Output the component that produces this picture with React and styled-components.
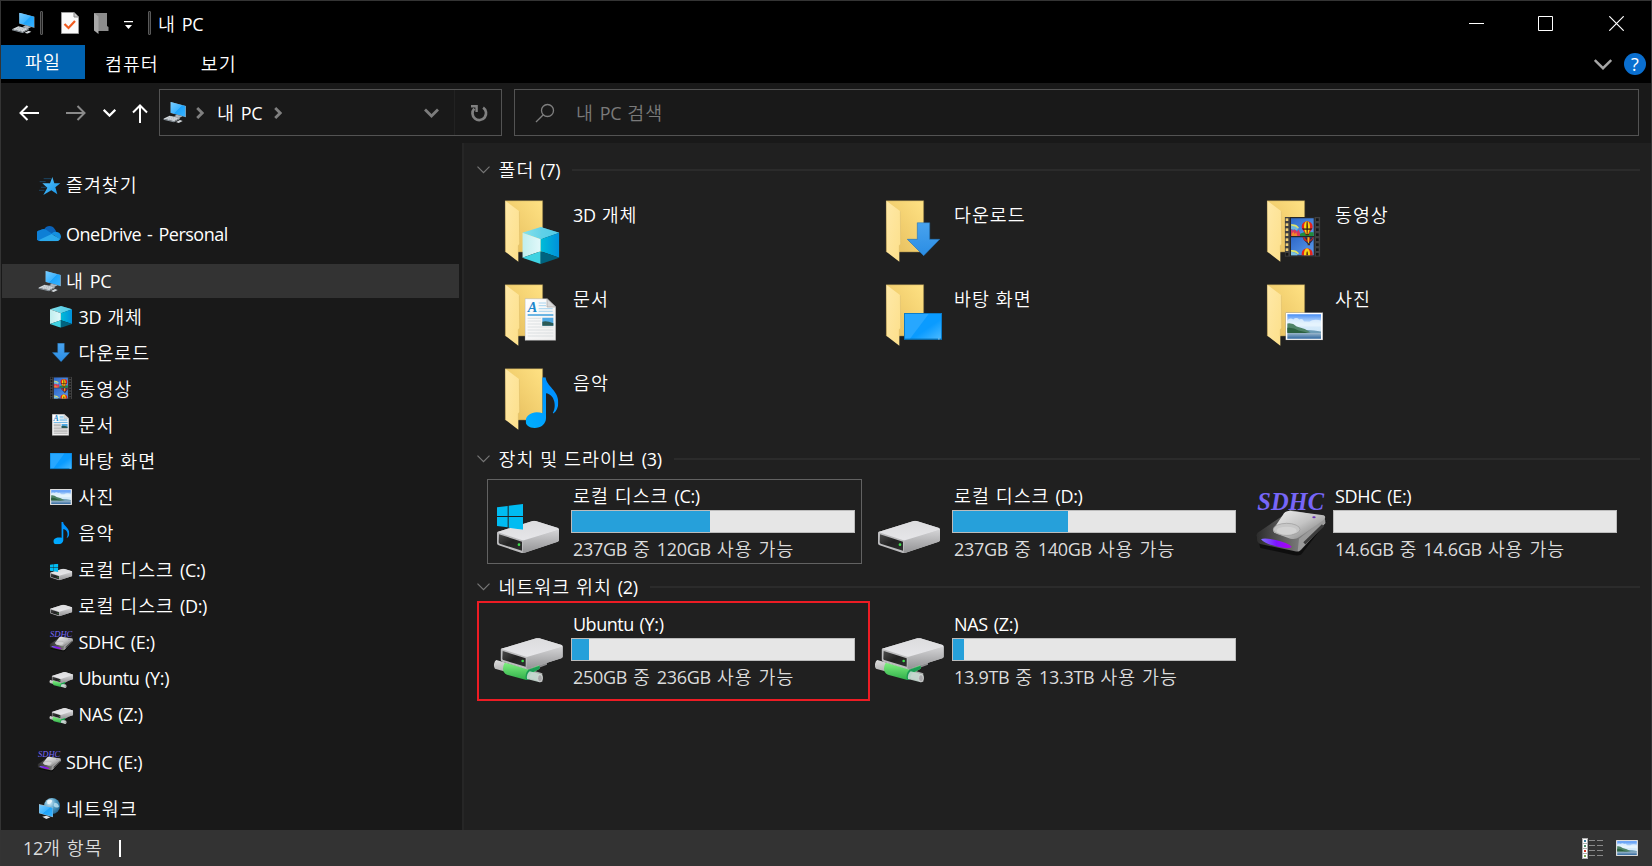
import React from "react";
import styled, { createGlobalStyle } from "styled-components";

const GlobalStyle = createGlobalStyle`
  *, *::before, *::after { box-sizing: border-box; }
  body { margin: 0; background: #191919; overflow: hidden; }
`;

const Window = styled.div`
  width: 1652px;
  height: 866px;
  display: flex;
  flex-direction: column;
  border: 1px solid #343434;
  border-bottom: 0;
  background: #191919;
  color: #fff;
  font-family: "Open Sans", "Noto Sans CJK KR", sans-serif;
  font-size: 18px;
  font-weight: 400;
  line-height: 24px;
  cursor: default;
  svg { display: block; flex: none; }
`;

const LabelBox = styled.span`
  white-space: pre;
`;
const runSpacing = { hangul: 1, space: 1.2, lower: -0.5, latin: -0.3 };
const Run = styled.span`
  letter-spacing: ${(p) => runSpacing[p.$kind]}px;
  font-size: ${(p) => (p.$kind === "hangul" ? 18.4 : 18)}px;
  font-weight: ${(p) => (p.$kind === "hangul" ? 350 : 400)};
`;
const kindOf = (s) =>
  /[가-힣]/.test(s) ? "hangul" : /^\s+$/.test(s) ? "space" : /[a-z]/.test(s) ? "lower" : "latin";
const Label = ({ children }) => (
  <LabelBox>
    {children.match(/[가-힣]+|\s+|[^\s가-힣]+/g).map((s, i) => (
      <Run key={i} $kind={kindOf(s)}>{s}</Run>
    ))}
  </LabelBox>
);

/* ---------- title bar ---------- */
const TitleBar = styled.header`
  height: 44px;
  flex: none;
  display: flex;
  align-items: center;
  background: #000;
  padding-left: 10px;
`;
const TitleText = styled.div`
  padding-top: 2px;
`;
const TitleSeparator = styled.i`
  width: 3px;
  height: 24px;
  margin-left: ${(p) => p.$before}px;
  margin-right: ${(p) => p.$after}px;
  border: 1px solid #5a5a5a;
  border-radius: 1px;
  background: #222;
`;
const QuickTools = styled.div`
  display: flex;
  align-items: center;
  gap: 15px;
`;
const QuickMore = styled.div`
  padding-top: 4px;
`;
const WindowButtons = styled.div`
  margin-left: auto;
  display: flex;
  height: 100%;
`;
const WindowButton = styled.button`
  width: ${(p) => p.$w || 70}px;
  height: 44px;
  padding: 0;
  border: 0;
  background: none;
  display: grid;
  place-items: center;
`;

/* ---------- ribbon ---------- */
const Ribbon = styled.nav`
  height: 38px;
  flex: none;
  display: flex;
  align-items: flex-start;
  background: #000;
`;
const FileTab = styled.div`
  width: 84px;
  height: 34px;
  display: grid;
  place-items: center;
  background: #0063b1;
`;
const RibbonTab = styled.div`
  margin-left: ${(p) => p.$gap}px;
  height: 38px;
  display: flex;
  align-items: center;
`;
const RibbonEnd = styled.div`
  margin-left: auto;
  margin-right: 5px;
  height: 38px;
  display: flex;
  align-items: center;
  gap: 12px;
`;
const HelpBadge = styled.div`
  width: 22px;
  height: 22px;
  border-radius: 50%;
  background: #0a6fd0;
  font-size: 18px;
  font-weight: 400;
  line-height: 22px;
  text-align: center;
`;

/* ---------- navigation ---------- */
const NavBar = styled.div`
  height: 60px;
  flex: none;
  display: flex;
  align-items: flex-start;
  padding: 6px 12px 0 18px;
`;
const NavButtons = styled.div`
  height: 47px;
  width: 140px;
  display: flex;
  align-items: center;
`;
const NavSpace = styled.i`
  width: ${(p) => p.$w}px;
`;
const AddressBox = styled.div`
  width: 343px;
  height: 47px;
  display: flex;
  align-items: center;
  border: 1px solid #535353;
  padding-left: 2px;
`;
const AddressEnd = styled.div`
  margin-left: auto;
  height: 45px;
  display: flex;
  align-items: center;
`;
const RefreshButton = styled.div`
  margin-left: 15px;
  width: 47px;
  height: 45px;
  padding-left: 2px;
  border-left: 1px solid #222;
  display: grid;
  place-items: center;
`;
const SearchBox = styled.div`
  flex: 1;
  margin-left: 12px;
  height: 47px;
  display: flex;
  align-items: center;
  gap: 21px;
  padding-left: 20px;
  border: 1px solid #535353;
  color: #7a7a7a;
`;

/* ---------- body ---------- */
const Body = styled.div`
  flex: 1;
  min-height: 0;
  display: flex;
`;
const Sidebar = styled.aside`
  width: 463px;
  flex: none;
  padding: 24px 3px 0 1px;
  border-right: 2px solid #262626;
`;
const TreeRow = styled.div`
  height: 36px;
  margin-top: ${(p) => p.$gap || 0}px;
  padding-left: ${(p) => (p.$child ? 46 : 34)}px;
  display: flex;
  align-items: center;
  gap: ${(p) => (p.$child ? 4.5 : 4)}px;
  background: ${(p) => (p.$active ? "#333" : "none")};
  ${(p) => p.$active && "border-top: 1px solid #191919; border-bottom: 1px solid #191919;"}
`;
const Content = styled.main`
  flex: 1;
  padding: 9px 11px 0 13px;
  background: #202020;
`;
const GroupHeader = styled.div`
  height: 36px;
  display: flex;
  align-items: center;
`;
const GroupTitle = styled.div`
  margin-left: 8.5px;
  display: flex;
  width: ${(p) => p.$w}px;
`;
const GroupRule = styled.i`
  flex: 1;
  height: 2px;
  background: #2b2b2b;
`;
const FolderGrid = styled.div`
  display: grid;
  grid-template-columns: repeat(3, 375px);
  column-gap: 6px;
  grid-auto-rows: 84px;
  padding-left: 10px;
  margin-bottom: 1px;
`;
const FolderCell = styled.div`
  display: flex;
  gap: 2px;
  padding-right: 8px;
`;
const FolderName = styled.div`
  padding-top: 15px;
`;
const DriveGrid = styled.div`
  display: grid;
  grid-template-columns: repeat(3, 375px);
  column-gap: 6px;
  grid-auto-rows: 85px;
  padding: 2px 0 5px 10px;
`;
const DriveCell = styled.div`
  position: relative;
  display: flex;
  outline: ${(p) => (p.$focused ? "1px solid #626262" : "none")};
  outline-offset: -1px;
`;
const RedFrame = styled.i`
  position: absolute;
  inset: -6px -8px -9px -10px;
  border: 2px solid #ed1c24;
`;
const DriveInfo = styled.div`
  display: flex;
  flex-direction: column;
  width: 284px;
`;
const DriveName = styled.div`
  height: 31px;
  padding: 5px 0 0 2px;
`;
const Meter = styled.div`
  height: 23px;
  border: 1px solid #bcbcbc;
  background: #e6e6e6;
`;
const MeterFill = styled.div`
  height: 21px;
  background: #26a0da;
`;
const DriveFree = styled.div`
  padding: 4px 0 0 2px;
  color: #dcdcdc;
`;

/* ---------- status bar ---------- */
const StatusBar = styled.footer`
  height: 36px;
  flex: none;
  display: flex;
  align-items: center;
  padding: 0 13px 0 22px;
  background: #333;
  color: #dcdcdc;
`;
const Caret = styled.i`
  width: 2px;
  height: 17px;
  margin-left: 16px;
  background: #fff;
`;
const ViewModes = styled.div`
  margin-left: auto;
  display: flex;
  align-items: center;
  gap: 13px;
`;

/* ---------- drawings ---------- */
const Art = ({ x, y, w, h, vw, vh, children }) => (
  <svg x={x} y={y} width={w} height={h} viewBox={`0 0 ${vw} ${vh}`} preserveAspectRatio="none">
    {children}
  </svg>
);

const HiddenSvg = styled.svg`
  position: absolute;
`;
const Defs = () => (
  <HiddenSvg width="0" height="0" aria-hidden="true">
    <defs>
      <linearGradient id="back" x1="0" y1="1" x2="1" y2="0">
        <stop offset="0" stopColor="#e3bb5a" /><stop offset=".5" stopColor="#f2cf6f" /><stop offset="1" stopColor="#ffe284" />
      </linearGradient>
      <linearGradient id="flap" x1="0" y1="0" x2="1" y2="1">
        <stop offset="0" stopColor="#ffe9a8" /><stop offset="1" stopColor="#fcdf8a" />
      </linearGradient>
      <linearGradient id="cubeL" x1="0" y1="0" x2="1" y2="0">
        <stop offset="0" stopColor="#bfeeee" /><stop offset="1" stopColor="#e2f8fa" />
      </linearGradient>
      <linearGradient id="cubeR" x1="0" y1="0" x2="1" y2="0">
        <stop offset="0" stopColor="#00bcd8" /><stop offset="1" stopColor="#0090dc" />
      </linearGradient>
      <linearGradient id="cubeT" x1="0" y1="0" x2="1" y2="0">
        <stop offset="0" stopColor="#86e2ea" /><stop offset="1" stopColor="#45c3e6" />
      </linearGradient>
      <linearGradient id="down" x1="0" y1="0" x2="0" y2="1">
        <stop offset="0" stopColor="#49a3ee" /><stop offset="1" stopColor="#2a8de4" />
      </linearGradient>
      <linearGradient id="desk" x1="0" y1="0" x2="1" y2="1">
        <stop offset="0" stopColor="#0a9bff" /><stop offset=".6" stopColor="#0a9bff" /><stop offset="1" stopColor="#4ab9ff" />
      </linearGradient>
      <linearGradient id="filmSky" x1="0" y1="0" x2="1" y2="1">
        <stop offset="0" stopColor="#2f68c8" /><stop offset="1" stopColor="#5b9cee" />
      </linearGradient>
      <linearGradient id="sky" x1="0" y1="0" x2="0" y2="1">
        <stop offset="0" stopColor="#4a8ff5" /><stop offset=".5" stopColor="#d8edfc" /><stop offset="1" stopColor="#cfe6f7" />
      </linearGradient>
      <linearGradient id="sea" x1="0" y1="0" x2="0" y2="1">
        <stop offset="0" stopColor="#9db8cc" /><stop offset="1" stopColor="#31689f" />
      </linearGradient>
      <linearGradient id="note" x1="0" y1="1" x2="1" y2="0">
        <stop offset="0" stopColor="#00b0ff" /><stop offset="1" stopColor="#0089ff" />
      </linearGradient>
      <linearGradient id="paper" x1="0" y1="0" x2="1" y2="1">
        <stop offset="0" stopColor="#ffffff" /><stop offset="1" stopColor="#eeeeee" />
      </linearGradient>
      <linearGradient id="steelTop" x1="0" y1="0" x2="0" y2="1">
        <stop offset="0" stopColor="#dcdcde" /><stop offset="1" stopColor="#e6e6e9" />
      </linearGradient>
      <linearGradient id="steelSide" x1="0" y1="0" x2="0" y2="1">
        <stop offset="0" stopColor="#d4d4d6" /><stop offset="1" stopColor="#939395" />
      </linearGradient>
      <linearGradient id="bay" x1="0" y1="0" x2="1" y2="1">
        <stop offset="0" stopColor="#4a4a4a" /><stop offset=".5" stopColor="#222" /><stop offset="1" stopColor="#303030" />
      </linearGradient>
      <linearGradient id="tube" x1="0" y1="0" x2="0" y2="1">
        <stop offset="0" stopColor="#dcdcdc" /><stop offset="1" stopColor="#8a8a8a" />
      </linearGradient>
      <linearGradient id="green" x1="0" y1="0" x2="0" y2="1">
        <stop offset="0" stopColor="#7ff07f" /><stop offset="1" stopColor="#2fae4a" />
      </linearGradient>
      <linearGradient id="metal" x1="0" y1="0" x2="1" y2="1">
        <stop offset="0" stopColor="#f0f0f0" /><stop offset=".5" stopColor="#c4c4c4" /><stop offset="1" stopColor="#6e6e6e" />
      </linearGradient>
      <linearGradient id="darkMetal" x1="0" y1="0" x2="1" y2="0">
        <stop offset="0" stopColor="#2c2c2c" /><stop offset=".6" stopColor="#777" /><stop offset="1" stopColor="#b5b5b5" />
      </linearGradient>
      <linearGradient id="violet" x1="0" y1="0" x2="1" y2="0">
        <stop offset="0" stopColor="#7f74ff" /><stop offset=".5" stopColor="#7d14ff" /><stop offset="1" stopColor="#b400f0" />
      </linearGradient>
      <linearGradient id="screen" x1="0" y1="0" x2="1" y2="1">
        <stop offset="0" stopColor="#79cdff" /><stop offset=".5" stopColor="#3fb4ff" /><stop offset=".52" stopColor="#1da4fb" /><stop offset="1" stopColor="#39b2ff" />
      </linearGradient>
      <radialGradient id="globe" cx=".35" cy=".3" r=".8">
        <stop offset="0" stopColor="#d5eefb" /><stop offset=".5" stopColor="#4f9cc4" /><stop offset="1" stopColor="#1c5d8a" />
      </radialGradient>
      <linearGradient id="star" x1="0" y1="0" x2="1" y2="1">
        <stop offset="0" stopColor="#58c4ff" /><stop offset="1" stopColor="#1493e6" />
      </linearGradient>
    </defs>
  </HiddenSvg>
);

const Cube = (p) => (
  <Art {...p} vw={111} vh={111}>
    <path d="M0 17L55 0L111 17L55 37Z" fill="url(#cubeT)" />
    <path d="M55 0L111 17L55 37Z" fill="#5dd0e8" opacity=".6" />
    <path d="M0 17L55 37V73L0 92Z" fill="url(#cubeL)" />
    <path d="M55 37L111 17V92L55 73Z" fill="url(#cubeR)" />
    <path d="M0 92L55 73V111Z" fill="#3fd2e2" />
    <path d="M111 92L55 73V111Z" fill="#00637f" />
  </Art>
);
const DownArrow = (p) => (
  <Art {...p} vw={101} vh={101}>
    <path d="M32 1H69V51H99L51 100L2 51H32Z" fill="url(#down)" stroke="#2272b8" strokeWidth="2" />
  </Art>
);
const Balloon = ({ x, y }) => (
  <g transform={`translate(${x} ${y})`}>
    <path d="M0 16A16 16 0 0 1 33 16C33 24 25 31 21 38H12C8 31 0 24 0 16Z" fill="#e6231b" />
    <path d="M7 16C7 5 12 0 16 0C20 0 25 5 25 16C25 24 22 31 20 37H13C10 31 7 24 7 16Z" fill="#f7d514" />
    <path d="M14 16C14 5 15 0 16.500 0C18 0 19 5 19 16C19 24 18 31 18 37H15C15 31 14 24 14 16Z" fill="#5c3212" />
    <path d="M1 21H32L29 26H4Z" fill="#1d1d1d" opacity=".7" />
    <path d="M12 38h10v4h-10z" fill="#51290d" />
  </g>
);
const Film = (p) => (
  <Art {...p} vw={107} vh={119}>
    <path d="M0 0H107V119H0Z" fill="#404040" />
    <path d="M16 0H90V119H16Z" fill="#262626" />
    <path d="M19 4H87V57H19Z" fill="url(#filmSky)" />
    <path d="M19 61H87V115H19Z" fill="url(#filmSky)" />
    <path d="M19 27Q30 22 42 34L36 40L19 36Z" fill="#6fb8dd" />
    <path d="M19 22q16 -2 24 10l-3 2q-9 -9 -21 -8z" fill="#dfe46a" />
    <path d="M19 36l6 5l5 -4l7 7l5 -6l4 10v9H19Z" fill="#d8375c" />
    <path d="M21 50l5 -6l4 7l5 -5l3 11H21Z" fill="#f0862a" />
    <path d="M46 50L60 45L87 46V57H46Z" fill="#1f8a3c" />
    <Balloon x={51} y={13} />
    <path d="M54 61H87C87 70 80 75 76 80H68C64 75 56 70 54 61Z" fill="#212a52" />
    <path d="M54 61H60L66 70L71 61H75L78 70L84 61H87C86 66 82 70 79 72L70 76L60 71C57 68 55 65 54 61Z" fill="#b92a20" />
    <path d="M68 61H74L73 78H70Z" fill="#f0b318" />
    <path d="M69 80h7v5h-7z" fill="#51290d" />
    <path d="M19 99q16 -2 24 10l-3 3q-9 -9 -21 -8z" fill="#dfe46a" />
    <path d="M19 104Q30 104 38 112V115H19Z" fill="#7cc3e2" />
    <path d="M51 110A16 16 0 0 1 84 110V115H51Z" fill="#e6231b" />
    <path d="M58 110A9 16 0 0 1 76 110V115H58Z" fill="#f7d514" />
    <path d="M65 110A3 16 0 0 1 70 110V115H65Z" fill="#5c3212" />
    {[4, 19, 34, 49, 64, 79, 94, 108].map((y) => (
      <g key={y}>
        <rect x="3" y={y} width="8" height="8" fill={p.dark ? "#111" : y > 100 ? "#161616" : "#f0cf77"} />
        <rect x="94" y={y} width="8" height="8" fill="#161616" />
      </g>
    ))}
  </Art>
);
const Scene = (p) => (
  <Art {...p} vw={113} vh={83}>
    <path d="M0 0H113V83H0Z" fill="#a6a6a6" />
    <path d="M2 2H111V81H2Z" fill="#fff" />
    <path d="M6 6H107V62H6Z" fill="url(#sky)" />
    <path d="M6 24q8 -10 18 -3q8 -8 18 0q10 -4 14 6l16 1q12 -10 35 -4V42H6Z" fill="#eaf5fd" opacity=".75" />
    <path d="M40 56Q66 48 107 57V62H40Z" fill="#6d9bb5" />
    <path d="M6 33Q22 30 34 42Q56 46 76 60H6Z" fill="#4f8367" />
    <path d="M6 46Q24 44 40 54L72 61H6Z" fill="#2c6141" />
    <path d="M6 61H107V78H6Z" fill="url(#sea)" />
  </Art>
);
const Desk = (p) => (
  <Art {...p} vw={114} vh={81}>
    <path d="M0 0H114V81H0Z" fill="#0b7cc9" />
    <path d="M3 3H111V77H3Z" fill="url(#desk)" />
    <path d="M3 3H74L18 77H3Z" fill="#33adff" opacity=".7" />
    <path d="M0 77H114V81H0Z" fill="#0868a8" />
    <path d="M102 77h5v2h-5z" fill="#fff" />
  </Art>
);
const Note = (p) => (
  <Art {...p} vw={98} vh={152}>
    <path d="M50 0H60C62 28 98 38 98 76C98 90 92 102 84 108C81 108 81 106 83 104C92 88 88 52 61 48V122C61 140 46 152 27 152C10 152 0 144 0 132C0 116 16 105 33 105C40 105 46 106 51 108Z" fill="url(#note)" />
  </Art>
);
const Doc = (p) => (
  <Art {...p} vw={94} vh={127}>
    <path d="M1 1H67L93 26V126H1Z" fill="url(#paper)" stroke="#b5b5b5" strokeWidth="2" />
    <path d="M67 1L93 26H67Z" fill="#d9d9d9" stroke="#a8a8a8" strokeWidth="2" />
    <path d="M42 14H64M42 22H64M42 31H84M42 39H84" stroke="#7fc1ea" strokeWidth={p.bold ? 5 : 2} />
    <path d="M9 50H86" stroke="#3e9fdc" strokeWidth="4" />
    <path d="M9 60H49M9 68H49M9 77H49M9 86H86M9 95H86M9 104H86M9 113H86" stroke={p.bold ? "#999" : "#cfd4d8"} strokeWidth={p.bold ? 4 : 2} />
    <path d="M53 58H86V82H53Z" fill="#4fa9e4" />
    <path d="M53 70Q66 66 86 75V82H53Z" fill="#2c5a55" />
    <text x="9" y="42" fontFamily="Liberation Serif, serif" fontStyle="italic" fontWeight="bold" fontSize="43" fill="#1c87cc">A</text>
  </Art>
);
const ArtPC = (p) => (
  <Art {...p} vw={68} vh={63}>
    <path d="M22 0L68 12V46L22 33Z" fill="#8a98a3" />
    <path d="M22 0L66 12V44L22 32Z" fill="url(#screen)" />
    <path d="M40 38L58 43L47 48L32 43Z" fill="#aab4bd" />
    <path d="M0 50L19 41L50 48L32 58Z" fill="#d6dbdf" />
    <path d="M0 50L32 58L50 48V51L32 61L0 53Z" fill="#8d979f" />
    <path d="M10 50L32 55M15 47L38 52M20 44L44 49" stroke="#98a2aa" strokeWidth="1.800" strokeDasharray="5 2" />
    <path d="M38 60L50 54L58 57L46 63Z" fill="#d3d8dc" />
  </Art>
);
const WinLogo = (p) => (
  <Art {...p} vw={78} vh={77}>
    <path d="M0 10L32 6V36H0ZM35 5L78 0V36H35ZM0 39H32V70L0 66ZM35 39H78V77L35 71Z" fill="#00bcf2" />
  </Art>
);
const Drive = (p) => (
  <Art {...p} vw={188} vh={98}>
    <path d="M2 34L108 1Q112 0 117 1L184 22Q188 24 187 28V58Q187 62 183 63L84 96Q80 98 75 97L6 74Q1 72 1 68V38Q1 35 2 34Z" fill="#bcbcbe" />
    <path d="M80 60L187 27V58Q187 62 183 63L84 96Q80 97 78 96Z" fill="url(#steelSide)" />
    <path d="M2 34L108 1Q112 0 117 1L184 22L187 27L84 58Q80 60 75 58Z" fill="url(#steelTop)" />
    <path d="M7 41L76 63V90L9 69Q6 68 6 65Z" fill="url(#bay)" />
    <circle cx="67" cy="72" r="4" fill="#3ce04a" />
  </Art>
);
const NetDrive = (p) => (
  <Art {...p} vw={208} vh={134}>
    <path d="M96 88L160 66V80L112 98Z" fill="#8e8e90" />
    <Drive x={20} y={0} w={188} h={94} />
    <path d="M8 66L146 106V132L4 92Q0 88 1 78Q3 68 8 66Z" fill="url(#tube)" />
    <path d="M34 74L104 95L136 82L138 92L104 112L98 126L40 110Q28 104 28 92Q29 78 34 74Z" fill="url(#green)" />
    <path d="M104 95L138 83V92L112 106L104 126L97 125Q92 108 104 95Z" fill="#1c9c55" />
    <path d="M108 100L143 109Q148 112 147 120Q145 132 138 133L100 123Q98 108 108 100Z" fill="#c9dcd3" opacity=".9" />
    <ellipse cx="139" cy="121" rx="7" ry="11" fill="#a9a9ab" stroke="#dedede" strokeWidth="2" />
  </Art>
);
const SdDrive = (p) => (
  <Art {...p} vw={214} vh={190}>
    <text x="5" y={p.thin ? 54 : 52} textLength="200" lengthAdjust="spacingAndGlyphs" fontFamily="Liberation Serif, serif" fontStyle="italic" fontWeight={p.thin ? 400 : 700} fontSize="74" fill="#7766f8">SDHC</text>
    <path d="M6 134L60 96L214 86L136 186Q126 190 112 187L14 166Z" fill="#000" opacity=".55" />
    <path d="M4 132Q0 128 6 120L86 66L104 52L206 72L209 92L136 172Q130 178 118 176L14 154Q4 150 4 140Z" fill="url(#darkMetal)" />
    <path d="M54 108L82 66Q86 56 102 54L204 68Q212 72 206 80L130 134Q120 142 104 138L60 122Q50 118 54 108Z" fill="url(#metal)" />
    <path d="M130 138L206 80Q209 78 209 90L136 170Q130 177 126 176Z" fill="#9a9a9a" />
    <path d="M146 152L202 98" stroke="#3c3c3c" strokeWidth="9" />
    <ellipse cx="93" cy="110" rx="40" ry="18" fill="#c6c6c6" stroke="#9a9a9a" strokeWidth="2" />
    <ellipse cx="93" cy="114" rx="30" ry="12" fill="#d2d2d2" />
    <ellipse cx="175" cy="74" rx="5" ry="3" fill="#6a2fb8" />
    <path d="M16 140Q24 134 60 142T108 162Q104 170 66 162T16 140Z" fill="url(#violet)" />
  </Art>
);
const NetGlobe = (p) => (
  <Art {...p} vw={64} vh={64}>
    <circle cx="39" cy="24" r="24" fill="url(#globe)" />
    <path d="M24 8Q34 2 40 8Q36 18 26 18Z" fill="#e8f5fb" />
    <path d="M46 14Q58 14 60 26Q52 32 44 24Z" fill="#bfe3f4" opacity=".8" />
    <path d="M0 18L42 28V58L0 46Z" fill="#a9b8c2" />
    <path d="M1 20L41 29V56L1 45Z" fill="url(#screen)" />
    <path d="M10 56L22 53L34 58L22 63Z" fill="#dfe3e6" />
  </Art>
);
const ArtStar = (p) => (
  <Art {...p} vw={66} vh={54}>
    <path d="M14 5H36M2 14H20M6 31H22M0 40H16" stroke="#1c6aa3" strokeWidth="2" opacity=".8" />
    <path d="M40 0L46 19H64L49 31L55 52L37 40L13 54L25 32L10 19H33Z" fill="url(#star)" />
  </Art>
);
const Cloud = (p) => (
  <Art {...p} vw={72} vh={47}>
    <path d="M22 10A18 18 0 0 1 53 10Q58 15 57 24L40 30L20 16Z" fill="#0a62b8" />
    <path d="M13 47A17 17 0 0 1 10 13Q22 6 34 17L48 26L14 46Z" fill="#0d7fd6" />
    <path d="M44 24Q48 17 57 18Q70 19 72 32Q72 38 69 41Z" fill="#148fe0" />
    <path d="M6 43L44 25L70 40Q66 47 58 47H14Q9 47 6 43Z" fill="#2aa9ec" />
  </Art>
);

const Folder = () => (
  <g transform="translate(-51 -114)">
    <path d="M106 152H218V306H106Z" fill="url(#back)" stroke="#8f7a45" strokeWidth="1.500" />
    <path d="M106 152L148 184L149 282L145 287V335L107 306Z" fill="url(#flap)" />
    <path d="M148 184L149 282L145 287V306" stroke="#d9b866" strokeWidth="1.500" fill="none" />
  </g>
);
const FolderIcon = ({ children }) => (
  <svg width="84" height="84" viewBox="0 0 252 252"><Folder />{children}</svg>
);
const DriveIcon = ({ children }) => (
  <svg width="84" height="85" viewBox="0 0 252 255">{children}</svg>
);
const TreeIcon = ({ children }) => (
  <svg width="26" height="36" viewBox="0 0 78 108">{children}</svg>
);

/* ---------- data ---------- */
const folders = [
  { name: "3D 개체", art: <Cube x={106} y={117} w={111} h={111} /> },
  { name: "다운로드", art: <DownArrow x={116} y={103} w={101} h={101} /> },
  { name: "동영상", art: <Film x={107} y={87} w={107} h={119} /> },
  { name: "문서", art: <Doc x={113} y={79} w={94} h={127} /> },
  { name: "바탕 화면", art: <Desk x={108} y={123} w={114} h={81} /> },
  { name: "사진", art: <Scene x={109} y={121} w={113} h={84} /> },
  { name: "음악", art: <Note x={116} y={64} w={98} h={152} /> },
];
const drives = [
  { name: "로컬 디스크 (C:)", free: "237GB 중 120GB 사용 가능", used: 138, focused: true,
    art: <><Drive x={29} y={125} w={188} h={98} /><WinLogo x={30} y={75} w={78} h={77} /></> },
  { name: "로컬 디스크 (D:)", free: "237GB 중 140GB 사용 가능", used: 115,
    art: <Drive x={29} y={125} w={188} h={98} /> },
  { name: "SDHC (E:)", free: "14.6GB 중 14.6GB 사용 가능", used: 0,
    art: <SdDrive x={20} y={41} w={214} h={190} /> },
];
const network = [
  { name: "Ubuntu (Y:)", free: "250GB 중 236GB 사용 가능", used: 17, marked: true,
    art: <NetDrive x={20} y={93} w={208} h={134} /> },
  { name: "NAS (Z:)", free: "13.9TB 중 13.3TB 사용 가능", used: 11,
    art: <NetDrive x={20} y={93} w={208} h={134} /> },
];
const tree = [
  { name: "즐겨찾기", art: <ArtStar x={9} y={30} w={66} h={54} /> },
  { name: "OneDrive - Personal", gap: 13, art: <Cloud x={3} y={29} w={72} h={47} /> },
  { name: "내 PC", gap: 11, active: true, art: <ArtPC x={7} y={24} w={68} h={63} /> },
  { name: "3D 개체", child: true, art: <Cube x={6} y={21} w={66} h={65} /> },
  { name: "다운로드", child: true, art: <DownArrow x={12} y={24} w={54} h={57} /> },
  { name: "동영상", child: true, art: <Film dark x={6} y={17} w={66} h={68} /> },
  { name: "문서", child: true, art: <Doc bold x={12} y={21} w={51} h={65} /> },
  { name: "바탕 화면", child: true, art: <Desk x={6} y={30} w={66} h={49} /> },
  { name: "사진", child: true, art: <Scene x={6} y={30} w={66} h={48} /> },
  { name: "음악", child: true, art: <Note x={16} y={21} w={48} h={67} /> },
  { name: "로컬 디스크 (C:)", child: true, gap: 1, art: <><Drive x={6} y={50} w={67} h={35} /><WinLogo x={6} y={35} w={25} h={25} /></> },
  { name: "로컬 디스크 (D:)", child: true, art: <Drive x={6} y={50} w={67} h={35} /> },
  { name: "SDHC (E:)", child: true, art: <SdDrive thin x={4} y={21} w={72} h={62} /> },
  { name: "Ubuntu (Y:)", child: true, art: <NetDrive x={4} y={36} w={72} h={48} /> },
  { name: "NAS (Z:)", child: true, art: <NetDrive x={4} y={36} w={72} h={48} /> },
  { name: "SDHC (E:)", gap: 12, art: <SdDrive thin x={4} y={21} w={72} h={62} /> },
  { name: "네트워크", gap: 11, art: <NetGlobe x={9} y={21} w={64} h={64} /> },
];

const Group = ({ title, w }) => (
  <GroupHeader>
    <svg width="13" height="8" viewBox="0 0 13 8"><path d="M.5.7L6.500 6.700L12.500.7" fill="none" stroke="#777" strokeWidth="1.200" /></svg>
    <GroupTitle $w={w}><Label>{title}</Label></GroupTitle>
    <GroupRule />
  </GroupHeader>
);
const DriveItem = ({ d }) => (
  <DriveCell $focused={d.focused}>
    <DriveIcon>{d.art}</DriveIcon>
    <DriveInfo>
      <DriveName><Label>{d.name}</Label></DriveName>
      <Meter><MeterFill style={{ width: d.used }} /></Meter>
      <DriveFree><Label>{d.free}</Label></DriveFree>
    </DriveInfo>
    {d.marked && <RedFrame />}
  </DriveCell>
);

export default function App() {
  return (
    <Window>
      <GlobalStyle />
      <Defs />
      <TitleBar>
        <svg width="25" height="24" viewBox="0 0 75 72"><ArtPC x={3} y={5} w={68} h={63} /></svg>
        <TitleSeparator $before={4} $after={18} />
        <QuickTools>
          <svg width="18" height="22" viewBox="0 0 18 22">
            <path d="M.5.500H13L17.500 5V21.500H.5Z" fill="#fafafa" stroke="#9a9a9a" />
            <path d="M13 .5V5H17.500" fill="#ccc" stroke="#8a8a8a" />
            <path d="M3.500 12L7.500 16L14 9" fill="none" stroke="#f05a1e" strokeWidth="2.200" />
          </svg>
          <svg width="15" height="22" viewBox="0 0 15 22">
            <path d="M0 1H13V14L14.500 15V19H4Z" fill="#8b8b8b" />
            <path d="M0 1L4.500 4.500V22L0 18.500Z" fill="#a9a9a9" />
          </svg>
          <QuickMore>
            <svg width="9" height="9" viewBox="0 0 9 9">
              <path d="M0 0H9V1.200H0ZM1 4H8L4.500 8Z" fill="#fff" />
            </svg>
          </QuickMore>
        </QuickTools>
        <TitleSeparator $before={15} $after={7} />
        <TitleText><Label>내 PC</Label></TitleText>
        <WindowButtons>
          <WindowButton aria-label="최소화" $w={65}><svg width="15" height="15" viewBox="0 0 15 15"><path d="M0 7.500H15" stroke="#fff" /></svg></WindowButton>
          <WindowButton aria-label="최대화" $w={73}><svg width="15" height="15" viewBox="0 0 15 15"><path d="M.5.500H14.500V14.500H.5Z" fill="none" stroke="#fff" /></svg></WindowButton>
          <WindowButton aria-label="닫기" $w={69}><svg width="15" height="15" viewBox="0 0 15 15"><path d="M.3.300L14.700 14.700M14.700.3L.3 14.700" stroke="#fff" strokeWidth="1.200" /></svg></WindowButton>
        </WindowButtons>
      </TitleBar>
      <Ribbon>
        <FileTab><Label>파일</Label></FileTab>
        <RibbonTab $gap={20}><Label>컴퓨터</Label></RibbonTab>
        <RibbonTab $gap={42}><Label>보기</Label></RibbonTab>
        <RibbonEnd>
          <svg width="18" height="11" viewBox="0 0 18 11"><path d="M.8 1L9 9.200L17.200 1" fill="none" stroke="#a6a6a6" strokeWidth="2.400" /></svg>
          <HelpBadge>?</HelpBadge>
        </RibbonEnd>
      </Ribbon>
      <NavBar>
        <NavButtons>
          <svg width="20" height="16" viewBox="0 0 20 16"><path d="M20 8H1.500M8.500 1L1.500 8L8.500 15" fill="none" stroke="#fff" strokeWidth="2" /></svg>
          <NavSpace $w={27} />
          <svg width="20" height="16" viewBox="0 0 20 16"><path d="M0 8H18.500M11.500 1L18.500 8L11.500 15" fill="none" stroke="#8a8a8a" strokeWidth="2" /></svg>
          <NavSpace $w={17} />
          <svg width="13" height="8" viewBox="0 0 13 8"><path d="M.7.800L6.500 6.600L12.300.8" fill="none" stroke="#fff" strokeWidth="2.200" /></svg>
          <NavSpace $w={16} />
          <svg width="16" height="20" viewBox="0 0 16 20"><path d="M8 20V2.500M1 9.500L8 2.500L15 9.500" fill="none" stroke="#fff" strokeWidth="2" /></svg>
        </NavButtons>
        <AddressBox>
          <svg width="25" height="24" viewBox="0 0 75 72"><ArtPC x={4} y={3} w={68} h={63} /></svg>
          <NavSpace $w={9} />
          <svg width="8" height="12" viewBox="0 0 8 12"><path d="M1.200 1L6.200 6L1.200 11" fill="none" stroke="#808080" strokeWidth="2.800" /></svg>
          <NavSpace $w={13} />
          <Label>내 PC</Label>
          <NavSpace $w={12} />
          <svg width="8" height="12" viewBox="0 0 8 12"><path d="M1.200 1L6.200 6L1.200 11" fill="none" stroke="#808080" strokeWidth="2.800" /></svg>
          <AddressEnd>
            <svg width="15" height="10" viewBox="0 0 15 10"><path d="M1 1.500L7.500 8L14 1.500" fill="none" stroke="#7c7c7c" strokeWidth="2.800" /></svg>
            <RefreshButton>
              <svg width="18" height="18" viewBox="0 0 18 18">
                <path d="M13.100 3.600A6.800 6.800 0 1 1 4.300 4.600" fill="none" stroke="#808080" strokeWidth="2.700" />
                <path d="M1 2.200H6.600V8" fill="none" stroke="#808080" strokeWidth="2.400" />
              </svg>
            </RefreshButton>
          </AddressEnd>
        </AddressBox>
        <SearchBox>
          <svg width="20" height="20" viewBox="0 0 20 20"><circle cx="12.500" cy="7.500" r="6" fill="none" stroke="#7f7f7f" strokeWidth="1.300" /><path d="M8.300 11.700L1 19" stroke="#7f7f7f" strokeWidth="1.300" /></svg>
          <Label>내 PC 검색</Label>
        </SearchBox>
      </NavBar>
      <Body>
        <Sidebar>
          {tree.map((t, i) => (
            <TreeRow key={i} $child={t.child} $gap={t.gap} $active={t.active}>
              <TreeIcon>{t.art}</TreeIcon>
              <Label>{t.name}</Label>
            </TreeRow>
          ))}
        </Sidebar>
        <Content>
          <Group title="폴더 (7)" w={73} />
          <FolderGrid>
            {folders.map((f) => (
              <FolderCell key={f.name}>
                <FolderIcon>{f.art}</FolderIcon>
                <FolderName><Label>{f.name}</Label></FolderName>
              </FolderCell>
            ))}
          </FolderGrid>
          <Group title="장치 및 드라이브 (3)" w={175} />
          <DriveGrid>{drives.map((d) => <DriveItem key={d.name} d={d} />)}</DriveGrid>
          <Group title="네트워크 위치 (2)" w={151} />
          <DriveGrid>{network.map((d) => <DriveItem key={d.name} d={d} />)}</DriveGrid>
        </Content>
      </Body>
      <StatusBar>
        <Label>12개 항목</Label>
        <Caret />
        <ViewModes>
          <svg width="21" height="21" viewBox="0 0 21 21">
            <path d="M0 0H6V21H0Z" fill="#b0b0b0" />
            {[1, 6, 11, 16].map((y, i) => (
              <g key={y}>
                <rect x="1" y={y} width="4" height="4" fill="#fff" />
                <rect x="2" y={y + 1} width="2" height="2" fill={["#3c7f9f", "#4f8f6a", "#d03a28", "#7aa850"][i]} />
                <path d={`M7 ${y + 1.500}h6M15 ${y + 1.500}h6`} stroke="#8a8a8a" />
              </g>
            ))}
          </svg>
          <svg width="22" height="16" viewBox="0 0 22 16"><Scene x={0} y={0} w={22} h={16} /></svg>
        </ViewModes>
      </StatusBar>
    </Window>
  );
}
